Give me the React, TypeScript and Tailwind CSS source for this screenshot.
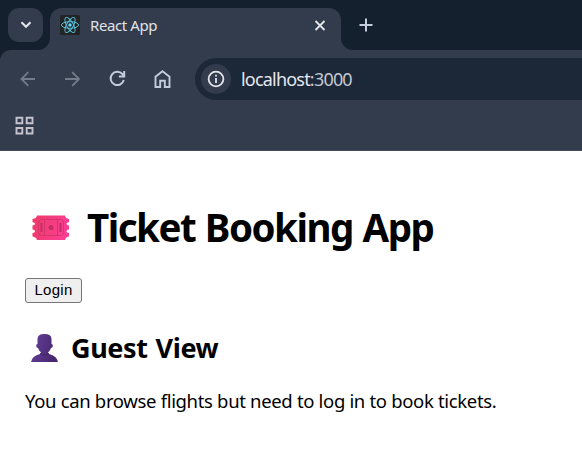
import React from "react";

function ReactLogo() {
  return (
    <svg width="20" height="20" viewBox="0 0 20 20" fill="none" stroke="#58c4dc" strokeWidth="0.95">
      <rect width="20" height="20" rx="1.5" fill="#222426" stroke="none" />
      <ellipse cx="10" cy="10" rx="8.6" ry="3.3" />
      <ellipse cx="10" cy="10" rx="8.6" ry="3.3" transform="rotate(60 10 10)" />
      <ellipse cx="10" cy="10" rx="8.6" ry="3.3" transform="rotate(120 10 10)" />
      <circle cx="10" cy="10" r="1.7" fill="#61dafb" stroke="none" />
    </svg>
  );
}

function TabStrip() {
  return (
    <div className="flex h-[50px] bg-[#14202d] pl-2 pt-2">
      <button className="flex h-[34px] w-[35px] items-center justify-center rounded-[11px] bg-[#323c4c]">
        <svg width="12" height="8" viewBox="0 0 12 8" fill="none" stroke="#e3e5ea" strokeWidth="2.1">
          <path d="M1.5 1.2 6 5.7 10.5 1.2" />
        </svg>
      </button>
      <div className="relative ml-[7px] flex h-[42px] w-[291px] rounded-t-[12px] bg-[#323c4c] pl-[10px] pt-[7px]">
        <svg className="absolute -left-3 bottom-0" width="12" height="12">
          <path d="M12 0V12H0A12 12 0 0 0 12 0Z" fill="#323c4c" />
        </svg>
        <svg className="absolute -right-3 bottom-0" width="12" height="12">
          <path d="M0 0V12H12A12 12 0 0 1 0 0Z" fill="#323c4c" />
        </svg>
        <ReactLogo />
        <span className="ml-[10px] w-[220px] whitespace-nowrap text-[15px] leading-[21px] tracking-[-0.4px] text-[#e0e2e8]">React App</span>
        <svg className="ml-[4px] mt-[5px]" width="12" height="11" viewBox="-0.5 0 12 11" stroke="#e3e5ea" strokeWidth="1.9">
          <path d="M1 1 10 10M10 1 1 10" />
        </svg>
      </div>
      <svg className="ml-[18px] mt-[10px]" width="14" height="14" viewBox="0 0 14 14" stroke="#c6cce0" strokeWidth="2">
        <path d="M7 .5V13.5M.5 7H13.5" />
      </svg>
    </div>
  );
}

function Toolbar() {
  return (
    <div className="bg-[#14202d]">
      <div className="h-[100px] rounded-tl-[11px] bg-[#323c4c] pt-2">
        <div className="flex h-[42px]">
          <div className="flex w-[195px] items-center pl-[20px]">
            <svg width="16" height="16" viewBox="0 0 16 16" fill="none" stroke="#727c8b" strokeWidth="1.8">
              <path d="M15 8H1.5M8.3 1.2 1.5 8 8.3 14.8" />
            </svg>
            <svg className="ml-[29px]" width="16" height="16" viewBox="0 0 16 16" fill="none" stroke="#727c8b" strokeWidth="1.8">
              <path d="M0 8H14M7.2 1.2 14 8 7.2 14.8" />
            </svg>
            <svg className="ml-[28px]" width="18" height="18" viewBox="0.6 0.4 18 18" fill="none" stroke="#c3cbdc" strokeWidth="2">
              <path d="M15.4 10.5A6.7 6.7 0 1 1 14 4.4L15.2 5.8M15.8 1.5V6.8H10.5" />
            </svg>
            <svg className="ml-[27px]" width="18" height="20" viewBox="0.5 0 18 20" fill="none" stroke="#c3cbdc" strokeWidth="1.9">
              <path d="M2 18V7.7L9 2.3 16 7.7V18H11.3V11.8H6.7V18Z" />
            </svg>
          </div>
          <div className="flex flex-1 items-center rounded-l-full bg-[#1c2737] pl-[6px]">
            <span className="flex size-[30px] items-center justify-center rounded-full bg-[#323c4c]">
              <svg width="18" height="18" viewBox="0 0 18 18" fill="none" stroke="#e2e4ea" strokeWidth="1.8">
                <circle cx="9" cy="9" r="7.4" />
                <path d="M9 8V13M9 4.8V6.5" />
              </svg>
            </span>
            <span className="ml-[10px] text-[18px] leading-6 tracking-[-0.8px] text-[#e4e7ee]">
              localhost<span className="text-[#c2c8d2]">:3000</span>
            </span>
          </div>
        </div>
        <svg className="ml-[15px] mt-[16px]" width="19" height="19" viewBox="0 0 19 19" fill="none" stroke="#c5c2ce" strokeWidth="1.9">
          <path d="M1.5 1.8H7.3V7.3H1.5ZM11.7 1.8H17.5V7.3H11.7ZM1.5 12H7.3V17.5H1.5ZM11.7 12H17.5V17.5H11.7Z" />
        </svg>
      </div>
      <div className="h-px bg-[#464c56]" />
    </div>
  );
}

function Ticket() {
  return (
    <svg width="38" height="26" viewBox="0 0 38 26">
      <defs>
        <linearGradient id="ticket" x1="0" x2="1" y1="0" y2=".2">
          <stop stopColor="#ee3a68" />
          <stop offset="1" stopColor="#fa3f93" />
        </linearGradient>
      </defs>
      <path fill="url(#ticket)" d="M5 .5H33Q33.5 3.5 37 4V7.2Q34.5 7.2 34.5 8.7T37 10.5V14.5Q34.5 14.7 34.5 16.2T37 18V21.5Q33.5 22 33 25H5Q4.5 22 .5 21.5V18Q3 18 3 16.2T.5 14.5V10.5Q3 10.3 3 8.7T.5 7.2V4Q4.5 3.5 5 .5Z" />
      <g fill="none" stroke="#d2336a" strokeWidth="0.9">
        <rect x="6.5" y="4.5" width="25" height="16" rx="3" />
        <path d="M12.5 5V20M25.5 5V20" />
      </g>
      <g fill="#c42d66">
        <rect x="8.5" y="8" width="2" height="9" />
        <rect x="27.5" y="8" width="2" height="9" />
        <circle cx="19" cy="12.5" r="2.5" />
      </g>
    </svg>
  );
}

function Person() {
  return (
    <svg width="27" height="28" viewBox="0 0 27 28">
      <defs>
        <linearGradient id="person" x1="0" x2="1" y1="0" y2=".3">
          <stop stopColor="#66419b" />
          <stop offset="1" stopColor="#482870" />
        </linearGradient>
      </defs>
      <path fill="url(#person)" d="M6.5 10V5Q6.5 0 13.5 0T20.5 5V10Q22 10 21.8 12T20 14Q19 17 17 18.2L18 20Q26 22 27 28H0Q1 22 9 20L10 18.2Q8 17 7 14Q5.3 14 5.2 12T6.5 10Z" />
      <path d="M9.5 19Q13.5 22 17.5 19L18 20Q13.5 23 9 20Z" fill="#44266c" />
    </svg>
  );
}

export default function App() {
  return (
    <div className="h-[465px] w-[582px] overflow-hidden bg-white font-['Noto_Sans','Open_Sans',sans-serif] text-black">
      <TabStrip />
      <Toolbar />
      <main className="flex flex-col items-start pl-[25px] pt-[50px]">
        <h1 className="flex h-[53px] items-center whitespace-nowrap pl-[7px] text-[38.5px] font-bold leading-[53px] tracking-[-1.5px] [word-spacing:1.2px]">
          <Ticket />
          <span className="ml-[17px]">Ticket Booking App</span>
        </h1>
        <button className="mt-[24px] h-[25px] w-[57px] rounded-[3px] border border-[#767676] bg-[#efefef] pb-px font-['Liberation_Sans',Arial,sans-serif] text-[15px] leading-[22px] tracking-[0.3px]">
          Login
        </button>
        <h2 className="mt-[27px] flex h-[36px] items-center whitespace-nowrap pl-[6px] text-[27px] font-bold leading-9 tracking-[-0.4px] [word-spacing:1.5px]">
          <Person />
          <span className="ml-[13px]">Guest View</span>
        </h2>
        <p className="mt-[21px] whitespace-nowrap text-[18.5px] leading-[27px] tracking-[-0.33px]">
          You can browse flights but need to log in to book tickets.
        </p>
      </main>
    </div>
  );
}
